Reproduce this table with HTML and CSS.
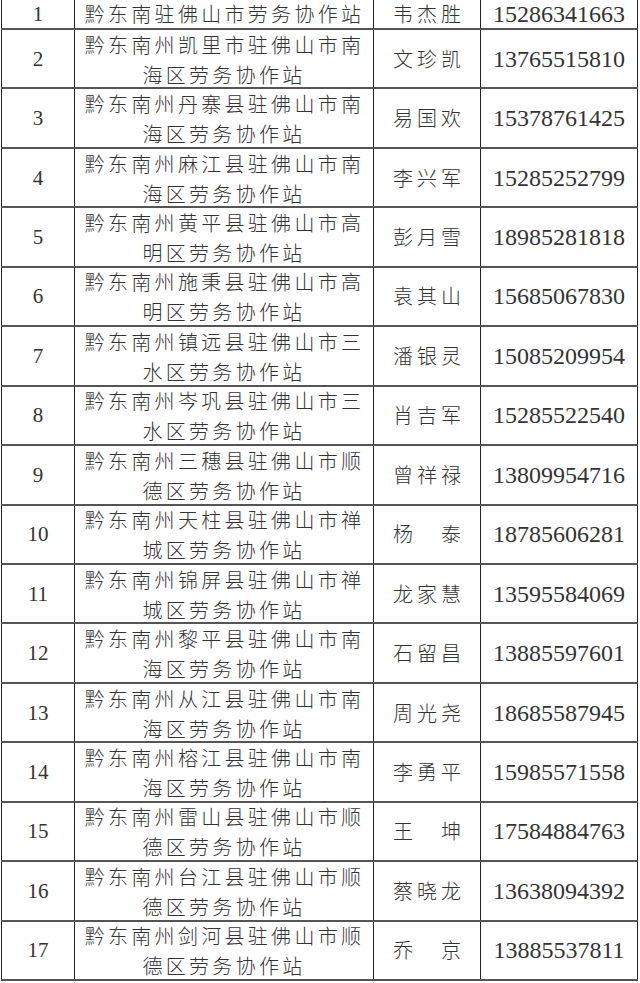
FILE: index.html
```html
<!DOCTYPE html>
<html lang="zh-CN">
<head>
<meta charset="utf-8">
<title>黔东南州驻佛山劳务协作站</title>
<link rel="stylesheet" href="styles.css">
</head>
<body>
<table class="sheet">
  <colgroup>
    <col class="c-no"><col class="c-site"><col class="c-name"><col class="c-tel">
  </colgroup>
  <tbody>
    <tr class="first"><td class="no">1</td><td class="site">黔东南驻佛山市劳务协作站</td><td class="name">韦杰胜</td><td class="tel">15286341663</td></tr>
    <tr><td class="no">2</td><td class="site"><span class="lines">黔东南州凯里市驻佛山市南<br>海区劳务协作站</span></td><td class="name">文珍凯</td><td class="tel">13765515810</td></tr>
    <tr><td class="no">3</td><td class="site"><span class="lines">黔东南州丹寨县驻佛山市南<br>海区劳务协作站</span></td><td class="name">易国欢</td><td class="tel">15378761425</td></tr>
    <tr><td class="no">4</td><td class="site"><span class="lines">黔东南州麻江县驻佛山市南<br>海区劳务协作站</span></td><td class="name">李兴军</td><td class="tel">15285252799</td></tr>
    <tr><td class="no">5</td><td class="site"><span class="lines">黔东南州黄平县驻佛山市高<br>明区劳务协作站</span></td><td class="name">彭月雪</td><td class="tel">18985281818</td></tr>
    <tr><td class="no">6</td><td class="site"><span class="lines">黔东南州施秉县驻佛山市高<br>明区劳务协作站</span></td><td class="name">袁其山</td><td class="tel">15685067830</td></tr>
    <tr><td class="no">7</td><td class="site"><span class="lines">黔东南州镇远县驻佛山市三<br>水区劳务协作站</span></td><td class="name">潘银灵</td><td class="tel">15085209954</td></tr>
    <tr><td class="no">8</td><td class="site"><span class="lines">黔东南州岑巩县驻佛山市三<br>水区劳务协作站</span></td><td class="name">肖吉军</td><td class="tel">15285522540</td></tr>
    <tr><td class="no">9</td><td class="site"><span class="lines">黔东南州三穗县驻佛山市顺<br>德区劳务协作站</span></td><td class="name">曾祥禄</td><td class="tel">13809954716</td></tr>
    <tr><td class="no">10</td><td class="site"><span class="lines">黔东南州天柱县驻佛山市禅<br>城区劳务协作站</span></td><td class="name">杨　泰</td><td class="tel">18785606281</td></tr>
    <tr><td class="no">11</td><td class="site"><span class="lines">黔东南州锦屏县驻佛山市禅<br>城区劳务协作站</span></td><td class="name">龙家慧</td><td class="tel">13595584069</td></tr>
    <tr><td class="no">12</td><td class="site"><span class="lines">黔东南州黎平县驻佛山市南<br>海区劳务协作站</span></td><td class="name">石留昌</td><td class="tel">13885597601</td></tr>
    <tr><td class="no">13</td><td class="site"><span class="lines">黔东南州从江县驻佛山市南<br>海区劳务协作站</span></td><td class="name">周光尧</td><td class="tel">18685587945</td></tr>
    <tr><td class="no">14</td><td class="site"><span class="lines">黔东南州榕江县驻佛山市南<br>海区劳务协作站</span></td><td class="name">李勇平</td><td class="tel">15985571558</td></tr>
    <tr><td class="no">15</td><td class="site"><span class="lines">黔东南州雷山县驻佛山市顺<br>德区劳务协作站</span></td><td class="name">王　坤</td><td class="tel">17584884763</td></tr>
    <tr><td class="no">16</td><td class="site"><span class="lines">黔东南州台江县驻佛山市顺<br>德区劳务协作站</span></td><td class="name">蔡晓龙</td><td class="tel">13638094392</td></tr>
    <tr><td class="no">17</td><td class="site"><span class="lines">黔东南州剑河县驻佛山市顺<br>德区劳务协作站</span></td><td class="name">乔　京</td><td class="tel">13885537811</td></tr>
  </tbody>
</table>
</body>
</html>
```
FILE: styles.css
```css
html, body {
  margin: 0;
  padding: 0;
  background: #ffffff;
}

body {
  padding-left: 1px;
}

.sheet {
  border-collapse: collapse;
  table-layout: fixed;
  width: 636px;
  color: #333333;
}

.c-no { width: 73px; }
.c-site { width: 299px; }
.c-name { width: 107px; }
.c-tel { width: 157px; }

.sheet td {
  border-left: 1px solid #222;
  border-right: 1px solid #222;
  border-bottom: 2px solid #555;
  padding: 0;
  text-align: center;
  vertical-align: middle;
  white-space: nowrap;
}

.sheet tr {
  height: 59.44px;
}

.sheet tr.first {
  height: 29px;
}

.no {
  font-family: "Liberation Serif", "Times New Roman", serif;
  font-size: 21px;
  line-height: 24px;
}

.tel {
  font-family: "Liberation Serif", "Times New Roman", serif;
  font-size: 24px;
  line-height: 26px;
  padding-top: 2px;
}

.site {
  font-family: "Noto Sans CJK SC", sans-serif;
  font-weight: 300;
  font-size: 20px;
  line-height: 26px;
  letter-spacing: 3.3px;
  text-indent: 1px;
}

.lines {
  display: block;
  line-height: 30px;
  margin: -1px 0 -3px;
}

.name {
  font-family: "Noto Sans CJK SC", sans-serif;
  font-weight: 300;
  font-size: 20px;
  line-height: 26px;
  letter-spacing: 4px;
  text-indent: 4px;
  padding-top: 2px;
}
```
